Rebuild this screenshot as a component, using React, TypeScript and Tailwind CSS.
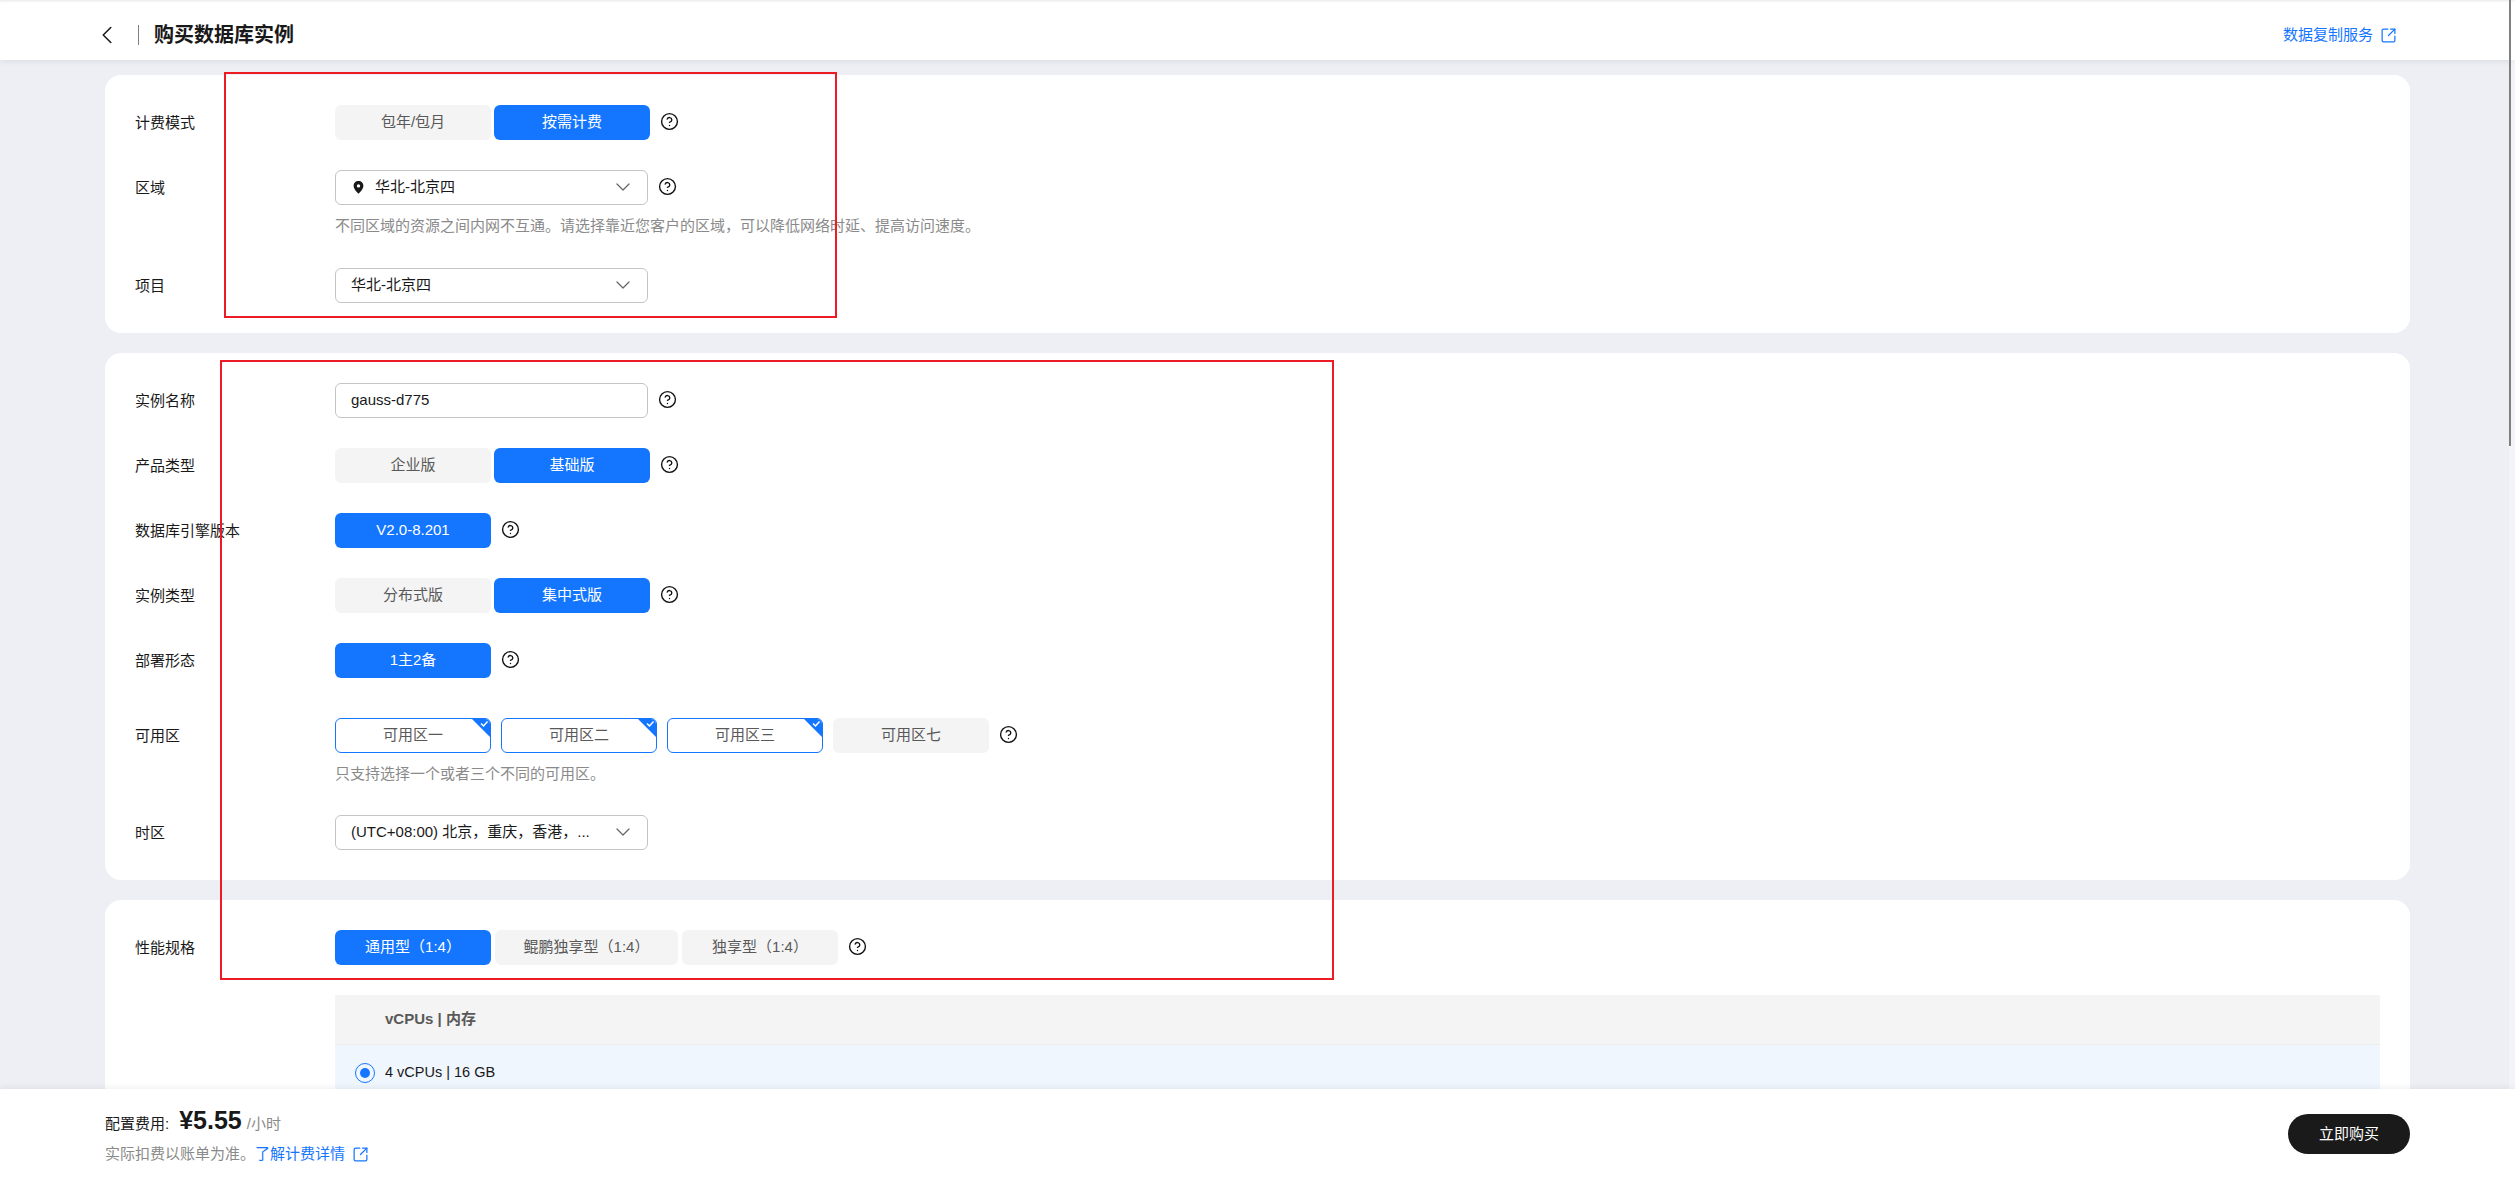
import React from "react";
import { ChevronDown, ChevronLeft, CircleHelp, SquareArrowOutUpRight } from "lucide-react";

const Help: React.FC = () => (
  <CircleHelp size={19} strokeWidth={1.75} className="ml-[10px] mt-[-3px] shrink-0 text-[#111]" />
);

const Row: React.FC<{ label: string; className?: string; hint?: string; children: React.ReactNode }> = ({
  label,
  className,
  hint,
  children,
}) => (
  <div className={`flex ${className ?? ""}`}>
    <div className="w-[200px] shrink-0 h-[35px] leading-[35px] text-[#191919]">{label}</div>
    <div>
      <div className="flex items-center h-[35px]">{children}</div>
      {hint && <p className="mt-[8px] leading-[26px] text-[#8a8a8a]">{hint}</p>}
    </div>
  </div>
);

const Option: React.FC<{ active?: boolean; className?: string; children: React.ReactNode }> = ({
  active,
  className,
  children,
}) => (
  <div
    className={`h-[35px] rounded-[6px] flex items-center justify-center ${
      active ? "bg-[#1476ff] text-white" : "bg-[#f4f4f4] text-[#595959]"
    } ${className ?? "w-[156px]"}`}
  >
    {children}
  </div>
);

const ZoneChecked: React.FC<{ name: string }> = ({ name }) => (
  <div className="relative w-[156px] h-[35px] rounded-[6px] border border-[#1476ff] overflow-hidden flex items-center justify-center text-[#595959]">
    {name}
    <svg width="18" height="18" viewBox="0 0 18 18" className="absolute top-0 right-0">
      <path d="M0 0H18V18Z" fill="#1476ff" />
      <path d="M9 4.5L11.5 7L15.5 2.5" fill="none" stroke="#fff" strokeWidth="1.5" />
    </svg>
  </div>
);

const Select: React.FC<{ pin?: boolean; value: string }> = ({ pin, value }) => (
  <div className="w-[313px] h-[35px] rounded-[6px] border border-[#c4c4c4] bg-white flex items-center pl-[15px] pr-[12px] text-[#191919]">
    {pin && (
      <svg width="11" height="13" viewBox="0 0 11 13" className="ml-[2px] mr-[11px] shrink-0">
        <path
          fillRule="evenodd"
          d="M5.5 0C2.6 0 .6 2.1.6 4.8c0 3 2.9 6 4.9 8 2-2 4.9-5 4.9-8C10.4 2.1 8.4 0 5.5 0Zm0 3.2a1.7 1.7 0 1 1 0 3.4 1.7 1.7 0 0 1 0-3.4Z"
          fill="#191919"
        />
      </svg>
    )}
    <span className="flex-1 truncate">{value}</span>
    <ChevronDown size={24} strokeWidth={1.25} className="text-[#666] shrink-0 mt-[-2px]" />
  </div>
);

export default function App() {
  return (
    <div className="relative h-screen overflow-hidden bg-[#eeeff5] text-[15px] font-['Liberation_Sans','Noto_Sans_CJK_SC',sans-serif]">
      {/* Header */}
      <header className="relative z-10 h-[60px] bg-white flex items-center justify-between pl-[92px] pr-[118px] pt-[10px] shadow-[inset_0_3px_3px_-2px_rgba(0,0,0,0.1),0_2px_6px_rgba(0,0,0,0.07)]">
        <div className="flex items-center">
          <ChevronLeft size={30} strokeWidth={1.25} className="text-[#191919]" />
          <div className="w-px h-[20px] bg-[#808080] ml-[16px] mr-[15px]" />
          <h1 className="text-[20px] font-bold text-[#191919]">购买数据库实例</h1>
        </div>
        <a className="flex items-center gap-[7px] text-[#1476ff]">
          数据复制服务
          <SquareArrowOutUpRight size={17} strokeWidth={1.75} />
        </a>
      </header>

      <main className="px-[105px] pt-[15px] space-y-[20px]">
        {/* Billing & region */}
        <section className="bg-white rounded-[16px] px-[30px] pt-[30px] pb-[30px]">
          <Row label="计费模式">
            <div className="flex gap-[3px]">
              <Option>包年/包月</Option>
              <Option active>按需计费</Option>
            </div>
            <Help />
          </Row>
          <Row
            label="区域"
            className="mt-[30px]"
            hint="不同区域的资源之间内网不互通。请选择靠近您客户的区域，可以降低网络时延、提高访问速度。"
          >
            <Select pin value="华北-北京四" />
            <Help />
          </Row>
          <Row label="项目" className="mt-[29px]">
            <Select value="华北-北京四" />
          </Row>
        </section>

        {/* Instance */}
        <section className="bg-white rounded-[16px] px-[30px] pt-[30px] pb-[30px]">
          <Row label="实例名称">
            <div className="w-[313px] h-[35px] rounded-[6px] border border-[#c4c4c4] flex items-center pl-[15px] text-[#191919]">
              gauss-d775
            </div>
            <Help />
          </Row>
          <Row label="产品类型" className="mt-[30px]">
            <div className="flex gap-[3px]">
              <Option>企业版</Option>
              <Option active>基础版</Option>
            </div>
            <Help />
          </Row>
          <Row label="数据库引擎版本" className="mt-[30px]">
            <Option active>V2.0-8.201</Option>
            <Help />
          </Row>
          <Row label="实例类型" className="mt-[30px]">
            <div className="flex gap-[3px]">
              <Option>分布式版</Option>
              <Option active>集中式版</Option>
            </div>
            <Help />
          </Row>
          <Row label="部署形态" className="mt-[30px]">
            <Option active>1主2备</Option>
            <Help />
          </Row>
          <Row label="可用区" className="mt-[40px]" hint="只支持选择一个或者三个不同的可用区。">
            <div className="flex gap-[10px]">
              <ZoneChecked name="可用区一" />
              <ZoneChecked name="可用区二" />
              <ZoneChecked name="可用区三" />
              <Option>可用区七</Option>
            </div>
            <Help />
          </Row>
          <Row label="时区" className="mt-[28px]">
            <Select value="(UTC+08:00) 北京，重庆，香港，..." />
          </Row>
        </section>

        {/* Specs */}
        <section className="bg-white rounded-t-[16px] px-[30px] pt-[30px] pb-[40px]">
          <Row label="性能规格">
            <div className="flex gap-[4px]">
              <Option active>通用型（1:4）</Option>
              <Option className="w-[183px]">鲲鹏独享型（1:4）</Option>
              <Option>独享型（1:4）</Option>
            </div>
            <Help />
          </Row>
          <div className="ml-[200px] mt-[30px]">
            <div className="h-[50px] bg-[#f4f4f4] border-b border-[#ececec] flex items-center pl-[50px] font-bold text-[#595959]">
              vCPUs | 内存
            </div>
            <div className="h-[56px] bg-[#eff6fe] flex items-center pl-[20px] text-[14.5px] text-[#191919]">
              <span className="w-[20px] h-[20px] rounded-full border border-[#1476ff] flex items-center justify-center mr-[10px]">
                <span className="w-[10px] h-[10px] rounded-full bg-[#1476ff]" />
              </span>
              4 vCPUs | 16 GB
            </div>
          </div>
        </section>
      </main>

      {/* Footer bar */}
      <footer className="absolute z-10 left-0 right-0 bottom-0 h-[90px] bg-white flex items-center justify-between px-[105px] shadow-[0_-2px_6px_rgba(0,0,0,0.06)]">
        <div>
          <div className="flex items-baseline h-[32px] text-[#191919]">
            配置费用:
            <span className="ml-[10px] text-[25px] font-bold">¥5.55</span>
            <span className="ml-[5px] text-[#8a8a8a]">/小时</span>
          </div>
          <div className="flex items-center mt-[9px] text-[#8a8a8a]">
            实际扣费以账单为准。
            <span className="text-[#1476ff]">了解计费详情</span>
            <SquareArrowOutUpRight size={17} strokeWidth={1.75} className="ml-[7px] text-[#1476ff]" />
          </div>
        </div>
        <button className="w-[122px] h-[40px] rounded-full bg-[#1a1a1a] text-white">立即购买</button>
      </footer>

      {/* Red annotation boxes drawn over the page */}
      <div className="absolute z-20 left-[224px] top-[72px] w-[613px] h-[246px] border-2 border-[#ed1c24]" />
      <div className="absolute z-20 left-[220px] top-[360px] w-[1114px] h-[620px] border-2 border-[#ed1c24]" />

      {/* Scrollbar */}
      <div className="absolute z-20 top-0 right-0 bottom-0 w-[6px] bg-white/30">
        <div className="w-[2px] h-[446px] bg-[#808080]" />
      </div>
    </div>
  );
}
